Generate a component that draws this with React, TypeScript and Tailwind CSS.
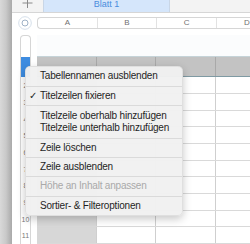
import React from 'react';

// Context menu entries, grouped between separators
type MenuGroup = { lines: string[]; h: number; checked?: boolean; disabled?: boolean };

const MENU: MenuGroup[] = [
  { lines: ['Tabellennamen ausblenden'], h: 20 },
  { lines: ['Titelzeilen fixieren'], h: 19, checked: true },
  { lines: ['Titelzeile oberhalb hinzufügen', 'Titelzeile unterhalb hinzufügen'], h: 33 },
  { lines: ['Zeile löschen'], h: 19 },
  { lines: ['Zeile ausblenden'], h: 19 },
  { lines: ['Höhe an Inhalt anpassen'], h: 20, disabled: true },
  { lines: ['Sortier- & Filteroptionen'], h: 18 },
];

const COLUMNS = ['A', 'B', 'C', 'D'];
const ROWS = [2, 3, 4, 5, 6, 7, 8, 9, 10, 11];

const TopBar = () => (
  <div className="flex h-[13px] shrink-0 border-b border-[#d6d6d6] bg-[#f3f3f3]">
    <div className="w-[31px] flex items-start justify-center">
      <svg width="11" height="9" viewBox="0 0 11 9" className="mt-[-1px]">
        <path d="M5.5 0V9M0.5 4H10.5" stroke="#8a8a8a" strokeWidth="1" />
      </svg>
    </div>
    <div className="w-[127px] flex justify-center bg-[#d5e6fb] border-x border-[#c9d6e6]">
      <span className="text-[9px] leading-[9px] text-[#4a8ddd]">Blatt 1</span>
    </div>
    <div className="flex-1" />
  </div>
);

const ColumnHeader = () => (
  <div className="flex items-center h-[25px] pl-[6px] pt-[2px]">
    <svg width="14" height="14" viewBox="0 0 14 14" className="shrink-0">
      <circle cx="7" cy="7" r="6.3" fill="#fff" stroke="#d5dfea" strokeWidth="1" />
      <circle cx="7" cy="7" r="3" fill="none" stroke="#9fb2c7" strokeWidth="1" />
    </svg>
    <div className="ml-[5px] flex h-[12px] flex-1 rounded-l-[4px] border border-r-0 border-[#d6d6d6] bg-white">
      {COLUMNS.map((c, i) => (
        <div
          key={c}
          className={`w-[59.7px] shrink-0 flex items-center justify-center text-[8px] leading-none text-[#707070] ${
            i < COLUMNS.length - 1 ? 'border-r border-[#e2e2e2]' : ''
          }`}
        >
          {c}
        </div>
      ))}
    </div>
  </div>
);

const Table = () => (
  <div className="flex pl-[8px] pt-[5px]">
    {/* row header pill */}
    <div className="w-[11px] shrink-0 flex flex-col rounded-t-[4px] border border-b-0 border-[#d6d6d6] overflow-hidden">
      <div className="h-[21px]" />
      <div className="h-[20px] bg-[#3e8ce0]" />
      {ROWS.map((r) => (
        <div key={r} className="h-[16.67px] flex items-center justify-center text-[7px] leading-none text-[#777]">
          {r}
        </div>
      ))}
    </div>

    <div className="ml-[6px] flex-1 flex flex-col">
      <div className="h-[22px] border-b border-[#c5d3d8] bg-[#fbfcfd]" />
      <div className="flex h-[20px] bg-[#c3c3c3] border-b border-[#7f9aa3]">
        {COLUMNS.map((c) => (
          <div key={c} className="w-[59.7px] shrink-0 border-r border-[#a9a9a9]" />
        ))}
      </div>
      {ROWS.map((r) => (
        <div key={r} className="flex h-[16.67px] border-b border-[#d9d9d9]">
          {COLUMNS.map((c, i) => (
            <div
              key={c}
              className={`w-[59.7px] shrink-0 border-r border-[#cfcfcf] ${i === 0 ? 'bg-[#d7d7d7]' : 'bg-white'}`}
            />
          ))}
        </div>
      ))}
    </div>
  </div>
);

const ContextMenu = () => (
  <div className="absolute left-[25px] top-[66px] w-[158px] rounded-[5px] bg-[#f1f1f1]/[0.97] border border-[#d3d3d3]/60 shadow-[0_3px_9px_rgba(0,0,0,0.22)] overflow-hidden">
    {MENU.map((g, i) => (
      <div
        key={i}
        style={{ height: g.h }}
        className={`relative flex flex-col justify-center pl-[14px] ${
          i < MENU.length - 1 ? 'border-b border-[#dadada]' : ''
        } ${g.disabled ? 'text-[#a9a9a9]' : 'text-[#1f1f1f]'}`}
      >
        {g.checked && (
          <span className="absolute left-[3px] top-1/2 -translate-y-1/2 text-[10px] leading-none">✓</span>
        )}
        {g.lines.map((l) => (
          <div key={l} className="text-[10px] leading-[12.5px] tracking-[-0.2px] whitespace-nowrap">
            {l}
          </div>
        ))}
      </div>
    ))}
  </div>
);

export default function App() {
  return (
    <div className="relative flex w-[250px] h-[244px] overflow-hidden bg-white font-['Liberation_Sans','Helvetica',sans-serif]">
      <div className="w-[12px] shrink-0 bg-gradient-to-r from-[#d9d9d9] via-[#c9c9c9] to-[#a9a9a9]" />
      <div className="flex-1 min-w-0 flex flex-col">
        <TopBar />
        <ColumnHeader />
        <Table />
      </div>
      <ContextMenu />
    </div>
  );
}
